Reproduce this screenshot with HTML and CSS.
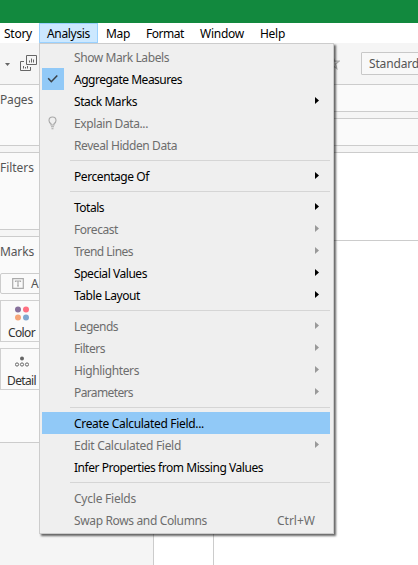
FILE: index.html
```html
<!DOCTYPE html>
<html lang="en">
<head>
<meta charset="utf-8">
<title>Analysis menu</title>
<link rel="stylesheet" href="styles.css">
</head>
<body>
<div class="titlebar"></div>
<nav class="menubar">
  <span class="tab story"><span class="t" data-w="28">Story</span></span>
  <span class="tab active"><span class="t" data-w="43">Analysis</span>
    <div class="menu">
      <div class="item off"><span class="t" data-w="95">Show Mark Labels</span></div>
      <div class="item"><span class="check"><svg width="12" height="10" viewBox="0 0 12 10"><path d="M1.2 4.3L4.3 7.7L10.3 1.5" fill="none" stroke="#3a4248" stroke-width="1.6"/></svg></span><span class="t" data-w="108">Aggregate Measures</span></div>
      <div class="item sub"><span class="t" data-w="63">Stack Marks</span></div>
      <div class="item off"><svg class="bulb" width="9" height="14" viewBox="0 0 9 14"><path d="M3 9V7.8C1.8 7 1 6 1 4.5a3.5 3.5 0 0 1 7 0C8 6 7.200 7 6 7.800V9zM3 10.800h3M3.500 12.700h2" fill="none" stroke="#a8a8a8" stroke-width="1.100"/></svg><span class="t" data-w="74">Explain Data...</span></div>
      <div class="item off"><span class="t" data-w="103">Reveal Hidden Data</span></div>
      <div class="sep"></div>
      <div class="item sub"><span class="t" data-w="75">Percentage Of</span></div>
      <div class="sep"></div>
      <div class="item sub"><span class="t" data-w="30">Totals</span></div>
      <div class="item sub off"><span class="t" data-w="44">Forecast</span></div>
      <div class="item sub off"><span class="t" data-w="59">Trend Lines</span></div>
      <div class="item sub"><span class="t" data-w="73">Special Values</span></div>
      <div class="item sub"><span class="t" data-w="66">Table Layout</span></div>
      <div class="sep"></div>
      <div class="item sub off"><span class="t" data-w="44">Legends</span></div>
      <div class="item sub off"><span class="t" data-w="31">Filters</span></div>
      <div class="item sub off"><span class="t" data-w="65">Highlighters</span></div>
      <div class="item sub off"><span class="t" data-w="59">Parameters</span></div>
      <div class="sep"></div>
      <div class="item hot"><span class="t" data-w="130">Create Calculated Field...</span></div>
      <div class="item sub off"><span class="t" data-w="107">Edit Calculated Field</span></div>
      <div class="item"><span class="t" data-w="189">Infer Properties from Missing Values</span></div>
      <div class="sep"></div>
      <div class="item off"><span class="t" data-w="62">Cycle Fields</span></div>
      <div class="item off"><span class="t" data-w="133">Swap Rows and Columns</span><span class="key"><span class="t" data-w="38">Ctrl+W</span></span></div>
    </div>
  </span>
  <span class="tab map"><span class="t" data-w="24">Map</span></span>
  <span class="tab format"><span class="t" data-w="38">Format</span></span>
  <span class="tab window"><span class="t" data-w="44">Window</span></span>
  <span class="tab help"><span class="t" data-w="25">Help</span></span>
</nav>
<div class="toolbar">
  <svg class="caret" width="5" height="3" viewBox="0 0 5 3"><path d="M0 0h5L2.500 3z" fill="#666"/></svg>
  <svg class="dup" width="17" height="17" viewBox="0 0 17 17" fill="none" stroke="#666"><path d="M6.500.5h10v9h-10zM4 6.500H.5v9h10V12M9.500 7.500V5.500M11.500 7.500V3.500M13.500 7.500V4.500M3.500 13.500V11M5.500 13.500V12M7.500 13.500V11"/></svg>
  <svg class="star" width="14" height="14" viewBox="0 0 14 14"><path d="M7 1l1.600 4.200H13L9.600 8l1.200 4.500L7 9.800l-3.800 2.700L4.400 8 1 5.200h4.400z" fill="none" stroke="#b0b0b0" stroke-width="1.200"/></svg>
  <div class="fit"><span class="t" data-w="50">Standard</span></div>
</div>
<div class="workspace">
  <aside>
    <section class="panel pages"><h2><span class="t" data-w="33">Pages</span></h2></section>
    <section class="panel filters"><h2><span class="t" data-w="34">Filters</span></h2></section>
    <section class="panel marks">
      <h2><span class="t" data-w="34">Marks</span></h2>
      <div class="marktype"><svg width="12" height="11" viewBox="0 0 12 11"><path d="M.7.7h10.600v9.600H.7zM3.500 4V3h5v1M6 3v5M5 8h2" fill="none" stroke="#aaa" stroke-width="1.200"/></svg><span>Automatic</span></div>
      <div class="cards">
        <div class="card"><svg width="14" height="15" viewBox="0 0 14 15"><circle cx="3" cy="3.500" r="3" fill="#87709c"/><circle cx="11" cy="3.500" r="3" fill="#ff6f80"/><circle cx="3" cy="11.500" r="3" fill="#f6a578"/><circle cx="11" cy="11.500" r="3" fill="#7fa6cf"/></svg><span class="t" data-w="27">Color</span></div>
        <div class="card"><svg width="14" height="15" viewBox="0 0 14 15"><circle cx="7" cy="4.500" r="2" fill="#666"/><g fill="none" stroke="#666"><circle cx="2" cy="10.500" r="1.600"/><circle cx="7" cy="10.500" r="1.600"/><circle cx="12" cy="10.500" r="1.600"/></g></svg><span class="t" data-w="29">Detail</span></div>
      </div>
    </section>
  </aside>
  <main>
    <div class="shelf columns"></div>
    <div class="shelf rows"></div>
    <div class="sheet"><div class="head"></div><div class="view"><div class="labels"></div></div></div>
  </main>
</div>
<script src="fit.js"></script>
</body>
</html>
```
FILE: styles.css
```css
* { box-sizing: border-box; }
body {
  margin: 0;
  width: 418px;
  height: 565px;
  overflow: hidden;
  display: flex;
  flex-direction: column;
  background: #f5f5f5;
  font: 12px/22px "Noto Sans", "Open Sans", sans-serif;
  color: #000;
}
svg { display: block; flex: none; }
.t { display: inline-block; white-space: nowrap; }

.titlebar { height: 23px; flex: none; background: #12893e; }
.menubar { height: 20px; flex: none; display: flex; background: #fff; }
.tab { height: 20px; line-height: 21px; padding-left: 8px; white-space: nowrap; }
.story { width: 39px; padding-left: 4px; }
.active {
  position: relative;
  width: 59px;
  padding-left: 7px;
  line-height: 19px;
  background: #cce8ff;
  border: 1px solid #99d1ff;
}
.map { width: 40px; }
.format { width: 54px; }
.window { width: 60px; }

.menu {
  position: absolute;
  z-index: 2;
  top: 19px;
  left: -1px;
  width: 295px;
  height: 491px;
  padding: 2px 3px 2px 2px;
  border: 1px solid #ccc;
  background: #efefef;
  box-shadow: 2px 2px 2px rgba(0, 0, 0, .6);
  clip-path: inset(0 -6px -6px 0);
}
.item {
  display: flex;
  position: relative;
  height: 22px;
  line-height: 23px;
  padding-left: 32px;
}
.off { color: #6d6d6d; }
.hot { background: #91c9f7; }
.check {
  width: 22px;
  height: 22px;
  margin: 0 10px 0 -32px;
  display: grid;
  place-items: center;
  background: #91c9f7;
}
.bulb { margin: 4px 17px 0 -26px; }
.sub::after {
  content: "";
  margin: 7px 11px 0 auto;
  width: 4px;
  height: 7px;
  background: #000;
  clip-path: polygon(0 0, 100% 50%, 0 100%);
}
.sub.off::after { background: #999; }
.key { margin-left: auto; width: 53px; }
.sep { height: 9px; padding: 4px 0 0 28px; }
.sep::before { content: ""; display: block; height: 1px; background: #d5d5d5; }

.toolbar {
  height: 42px;
  flex: none;
  display: flex;
  border-bottom: 1px solid #ccc;
}
.caret { margin: 20px 0 0 5px; }
.dup { margin: 12px 0 0 10px; }
.star { margin: 13px 0 0 289px; }
.fit {
  flex: none;
  width: 100px;
  height: 23px;
  margin: 9px 0 0 21px;
  padding-left: 7px;
  border: 1px solid #c8c8c8;
  border-radius: 1px;
  background: #f8f8f8;
  color: #555;
  line-height: 21px;
}

.workspace { flex: 1; display: flex; color: #555; }
aside { width: 153px; flex: none; }
.panel { background: #fafafa; border-bottom: 1px solid #ccc; }
.panel + .panel { margin-top: 6px; border-top: 1px solid #ccc; }
h2 { margin: 0; font-size: 12px; font-weight: 400; line-height: 22px; }
.pages { height: 61px; padding-top: 4px; }
.filters { height: 78px; padding-top: 4px; }
.marks { height: 207px; padding-top: 4px; }
.marktype {
  height: 21px;
  margin: 10px 8px 0 0;
  display: flex;
  align-items: center;
  gap: 7px;
  padding-left: 11px;
  border: 1px solid #ccc;
  border-radius: 2px;
}
.cards { display: flex; flex-direction: column; gap: 6px; margin-top: 6px; }
.card {
  width: 43px;
  height: 42px;
  padding-top: 5px;
  display: flex;
  flex-direction: column;
  align-items: center;
  border: 1px solid #d0d0d0;
  color: #333;
  line-height: 24px;
}

main { flex: 1; display: flex; flex-direction: column; }
.shelf { background: #fafafa; border-bottom: 1px solid #ccc; }
.columns { height: 27px; }
.rows { height: 28px; margin-top: 6px; border-top: 1px solid #ccc; }
.sheet {
  flex: 1;
  display: flex;
  flex-direction: column;
  margin-top: 6px;
  border-top: 1px solid #ccc;
  border-left: 1px solid #ccc;
  background: #fff;
}
.head { height: 88px; border-bottom: 1px solid #ccc; }
.view { flex: 1; display: flex; }
.labels { width: 60px; border-right: 1px solid #ccc; }
```
FILE: fit.js
```js
// Space each label's letters so that it fills its column width.
document.querySelectorAll(".t[data-w]").forEach(function (el) {
  var extra = (Number(el.dataset.w) - el.getBoundingClientRect().width) / el.textContent.length;
  el.style.letterSpacing = extra + "px";
});
```
